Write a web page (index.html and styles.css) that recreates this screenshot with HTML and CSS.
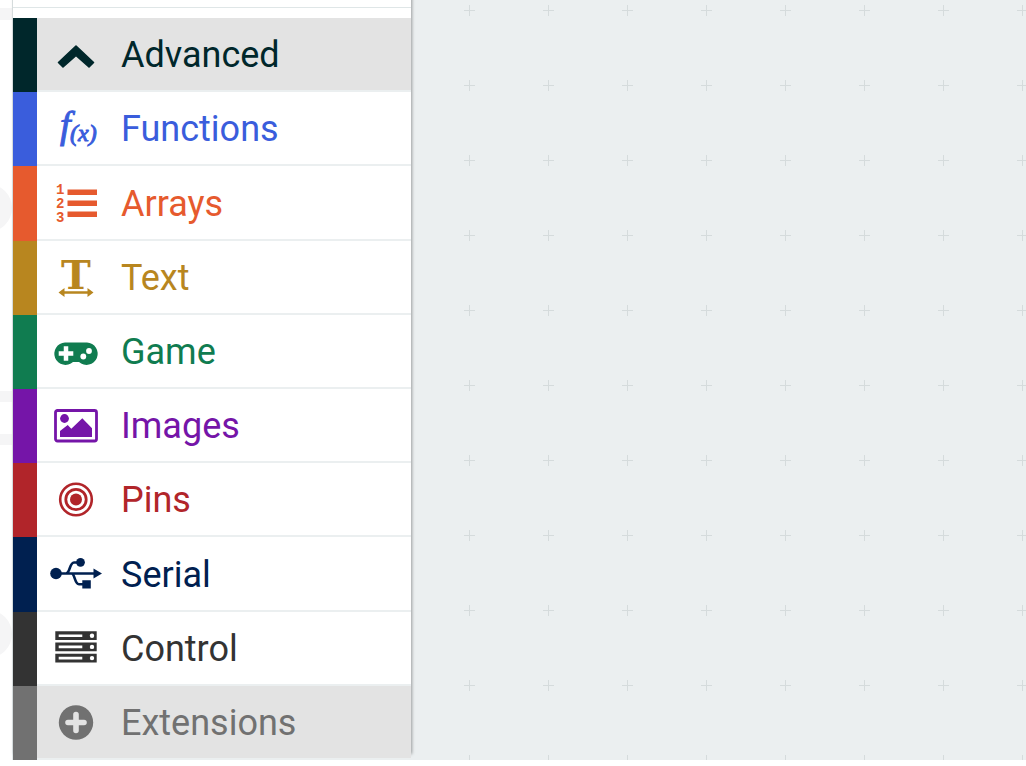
FILE: index.html
```html
<!DOCTYPE html>
<html lang="en">
<head>
    <meta charset="UTF-8">
    <meta name="viewport" content="width=device-width, initial-scale=1.0">
    <title>Block Editor</title>
    <link rel="stylesheet" href="styles.css">
</head>
<body>
    <div class="editor">
        <div class="gutter">
            <svg width="13" height="760" aria-hidden="true">
                <g fill="#f5f5f6">
                    <rect y="8" width="13" height="12"/>
                    <circle cx="-12" cy="208" r="24"/>
                    <rect y="391" width="13" height="11"/>
                    <rect y="434" width="13" height="11"/>
                    <circle cx="-12" cy="634" r="24"/>
                </g>
            </svg>
        </div>
        <nav class="toolbox">
            <div class="previous"></div>
            <button class="category advanced">
                <svg class="icon" viewBox="0 0 52 44"><path d="M26 14L43.500 30.500 39 35 26 23.500 13 35 8.500 30.500z" fill="currentColor" stroke="currentColor" stroke-width="1.600" stroke-linejoin="round"/></svg>
                <span>Advanced</span>
            </button>
            <button class="category functions">
                <svg class="icon fx" viewBox="0 0 52 44">
                    <text class="fx-f" x="10" y="32">f</text>
                    <text class="fx-x" x="20" y="35">(x)</text>
                </svg>
                <span>Functions</span>
            </button>
            <button class="category arrays">
                <svg class="icon" viewBox="0 0 52 44" fill="currentColor">
                    <g class="digits">
                        <text x="6" y="13">1</text>
                        <text x="6" y="27">2</text>
                        <text x="6" y="41">3</text>
                    </g>
                    <path d="M17.500 8.500h29.500v5.500h-29.500zM17.500 19.500h29.500v5.500h-29.500zM17.500 30.500h29.500v5.500h-29.500z"/>
                </svg>
                <span>Arrays</span>
            </button>
            <button class="category text">
                <svg class="icon" viewBox="0 0 52 44" fill="currentColor">
                    <text class="letter" x="26" y="34" text-anchor="middle">T</text>
                    <path d="M8.500 37.500l6-4.500v3.200h23v-3.200l6 4.500-6 4.500v-3.200h-23v3.200z"/>
                </svg>
                <span>Text</span>
            </button>
            <button class="category game">
                <svg class="icon" viewBox="0 0 52 44">
                    <path d="M15 13.500h22a11.200 11.200 0 1 1-8 19.500h-6A11.200 11.200 0 1 1 15 13.500z" fill="currentColor"/>
                    <path d="M16 17.200v14.600M8.700 24.500h14.600" stroke="#fff" stroke-width="4.500"/>
                    <circle cx="33.300" cy="27.500" r="2.900" fill="#fff"/>
                    <circle cx="39" cy="22" r="2.900" fill="#fff"/>
                </svg>
                <span>Game</span>
            </button>
            <button class="category images">
                <svg class="icon" viewBox="0 0 52 44" fill="currentColor">
                    <rect x="5.500" y="7.500" width="41" height="30.500" rx="2" fill="none" stroke="currentColor" stroke-width="2.800"/>
                    <circle cx="14.500" cy="15.500" r="4.400"/>
                    <path d="M10 34v-6l7.700-6 3.600 3.700 11-10.400L42 25.300V34z"/>
                </svg>
                <span>Images</span>
            </button>
            <button class="category pins">
                <svg class="icon" viewBox="0 0 52 44">
                    <circle cx="26" cy="22.500" r="15.800" fill="none" stroke="currentColor" stroke-width="2.600"/>
                    <circle cx="26" cy="22.500" r="10.200" fill="none" stroke="currentColor" stroke-width="2.800"/>
                    <circle cx="26" cy="22.500" r="6" fill="currentColor"/>
                </svg>
                <span>Pins</span>
            </button>
            <button class="category serial">
                <svg class="icon" viewBox="0 0 52 44" fill="currentColor">
                    <path d="M6 21.500h39M16 21.500c4 0 3.500-11 8-11h6M21.500 21.500c3.500 0 3 10.700 7.500 10.700h5" fill="none" stroke="currentColor" stroke-width="2.600"/>
                    <circle cx="6" cy="21.500" r="5.800"/>
                    <circle cx="30.500" cy="10.300" r="4.400"/>
                    <path d="M32.300 28.300h8.500v8.300h-8.500zM43.500 16.500l8.500 5-8.500 5z"/>
                </svg>
                <span>Serial</span>
            </button>
            <button class="category control">
                <svg class="icon" viewBox="0 0 52 44">
                    <path d="M5.300 5.300h41.400v8.700h-41.400zM5.300 16.500h41.400v8.700h-41.400zM5.300 27.700h41.400v8.700h-41.400z" fill="currentColor"/>
                    <path d="M8.700 9.700h23.600M8.700 20.900h23.600M8.700 32.100h23.600" stroke="#fff" stroke-width="2.600"/>
                    <g fill="#fff">
                        <circle cx="42" cy="9.700" r="2.200"/>
                        <circle cx="42" cy="20.900" r="2.200"/>
                        <circle cx="42" cy="32.100" r="2.200"/>
                    </g>
                </svg>
                <span>Control</span>
            </button>
            <button class="category extensions">
                <svg class="icon" viewBox="0 0 52 44">
                    <circle cx="26" cy="22.500" r="17.200" fill="currentColor"/>
                    <path d="M26 14.500v16M18 22.500h16" stroke="#e3e3e3" stroke-width="5.600" stroke-linecap="round"/>
                </svg>
                <span>Extensions</span>
            </button>
        </nav>
        <main class="workspace"></main>
    </div>
</body>
</html>
```
FILE: styles.css
```css
* {
    box-sizing: border-box;
}

body {
    margin: 0;
    background: #fff;
    font-family: Roboto, sans-serif;
}

.editor {
    display: flex;
    height: 100vh;
    min-height: 500px;
    padding-bottom: 6px;
    overflow: hidden;
}

.gutter {
    width: 13px;
    flex-shrink: 0;
    overflow: hidden;
    border-right: 1px solid #e3e9ea;
}

.gutter svg {
    display: block;
}

.toolbox {
    display: flex;
    flex-direction: column;
    width: 398px;
    flex-shrink: 0;
    z-index: 1;
    background: #fff;
    box-shadow: 1px -6px 3px rgba(0, 0, 0, 0.35);
}

.previous {
    height: 8px;
    margin-bottom: 10px;
    border-bottom: 1px solid #dfe6e7;
}

.category {
    display: flex;
    flex: 1;
    align-items: center;
    gap: 19px;
    width: 100%;
    margin: 0;
    padding: 0 0 0 13px;
    border: 0;
    border-left: 24px solid currentColor;
    background: #fff;
    box-shadow: inset 0 -2px #ebeff0;
    font-family: inherit;
    font-size: 36px;
    line-height: 40px;
    text-align: left;
    cursor: pointer;
}

.icon {
    width: 52px;
    height: 44px;
    margin-bottom: 2px;
    flex-shrink: 0;
    overflow: visible;
}

/* f(x) icon */
.fx {
    fill: currentColor;
    stroke: currentColor;
    stroke-width: 1px;
    font-family: "Liberation Serif", serif;
    font-style: italic;
}

.fx-f {
    font-size: 38px;
}

.fx-x {
    font-size: 24px;
}

.digits {
    font-family: "Liberation Mono", monospace;
    font-size: 14px;
    font-weight: bold;
}

.letter {
    font-family: "DejaVu Serif", serif;
    font-size: 40px;
    font-weight: bold;
}

/* category colors */
.advanced { color: #00272b; }
.functions { color: #3a5ddc; }
.arrays { color: #e65a2e; }
.text { color: #b8861f; }
.game { color: #107c50; }
.images { color: #7515a8; }
.pins { color: #b1252a; }
.serial { color: #002050; }
.control { color: #333; }
.extensions { color: #717171; }

.advanced,
.extensions {
    background: #e3e3e3;
}

.workspace {
    flex: 1;
    background-color: #ebeff0;
    background-image:
        radial-gradient(6px 1px, #d5dbdc 99%, transparent),
        radial-gradient(1px 6px, #d5dbdc 99%, transparent);
    background-size: 79px 75px;
    background-position: 19px -27px;
}
```
